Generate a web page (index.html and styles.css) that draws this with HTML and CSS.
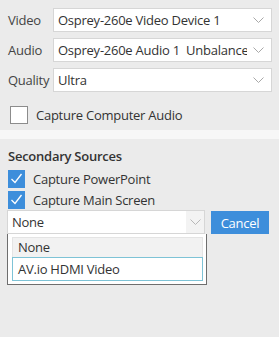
FILE: index.html
```html
<!DOCTYPE html>
<html>
<head>
<meta charset="utf-8">
<link rel="stylesheet" href="styles.css">
</head>
<body>
<div class="top">
  <div class="row">
    <span class="label">Video</span>
    <div class="select"><span class="val">Osprey-260e Video Device 1</span><svg class="chev" width="11" height="6" viewBox="0 0 11 6"><path d="M0.5 0.5 L5.5 5.5 L10.5 0.5" fill="none" stroke="#a8a8a8" stroke-width="1"/></svg></div>
  </div>
  <div class="row">
    <span class="label">Audio</span>
    <div class="select"><span class="val">Osprey-260e Audio 1&nbsp; Unbalanced</span><svg class="chev" width="11" height="6" viewBox="0 0 11 6"><path d="M0.5 0.5 L5.5 5.5 L10.5 0.5" fill="none" stroke="#a8a8a8" stroke-width="1"/></svg></div>
  </div>
  <div class="row">
    <span class="label">Quality</span>
    <div class="select"><span class="val">Ultra</span><svg class="chev" width="11" height="6" viewBox="0 0 11 6"><path d="M0.5 0.5 L5.5 5.5 L10.5 0.5" fill="none" stroke="#a8a8a8" stroke-width="1"/></svg></div>
  </div>
  <div class="check-row first">
    <span class="box"></span>
    <span class="ctext">Capture Computer Audio</span>
  </div>
</div>
<div class="sep"></div>
<div class="secondary">
  <div class="title">Secondary Sources</div>
  <div class="check-row small">
    <span class="box checked"><svg width="17" height="17" viewBox="0 0 17 17"><path d="M3.5 9 L7 12.5 L13.5 4" fill="none" stroke="#fff" stroke-width="1.3"/></svg></span>
    <span class="ctext">Capture PowerPoint</span>
  </div>
  <div class="check-row small">
    <span class="box checked"><svg width="17" height="17" viewBox="0 0 17 17"><path d="M3.5 9 L7 12.5 L13.5 4" fill="none" stroke="#fff" stroke-width="1.3"/></svg></span>
    <span class="ctext">Capture Main Screen</span>
  </div>
  <div class="drop-row">
    <div class="dd">
      <div class="select sel2"><span class="val">None</span><span class="chev-area"><svg width="11" height="6" viewBox="0 0 11 6"><path d="M0.5 0.5 L5.5 5.5 L10.5 0.5" fill="none" stroke="#b8b8b8" stroke-width="1"/></svg></span></div>
      <div class="popup">
        <div class="item hover">None</div>
        <div class="item focus">AV.io HDMI Video</div>
      </div>
    </div>
    <button class="btn">Cancel</button>
  </div>
</div>
</body>
</html>
```
FILE: styles.css
```css
html, body {
  margin: 0;
  padding: 0;
}
body {
  background: #ebebeb;
  font-family: "Open Sans", "Noto Sans", sans-serif;
  font-size: 13px;
  letter-spacing: -0.25px;
  color: #333;
  width: 279px;
  height: 337px;
  overflow: hidden;
}
.top {
  padding: 8px 7px 0 8px;
  height: 122px;
}
.row {
  display: flex;
  align-items: center;
  height: 24px;
  margin-bottom: 6px;
}
.label {
  width: 45px;
  color: #444;
}
.select {
  flex: 1;
  height: 22px;
  border: 1px solid #d6d6d6;
  background: #fff;
  display: flex;
  align-items: center;
  padding-left: 4px;
  overflow: hidden;
}
.val {
  flex: 1;
  white-space: nowrap;
  overflow: hidden;
  color: #333;
}
.chev {
  flex: none;
  margin: 0 7px 0 6px;
}
.check-row {
  display: flex;
  align-items: center;
}
.check-row.first {
  margin-top: 14px;
  padding-left: 2px;
}
.box {
  width: 16px;
  height: 16px;
  border: 1px solid #8c8c8c;
  background: #fff;
  flex: none;
}
.check-row.first .ctext {
  margin-left: 8px;
}
.sep {
  height: 9px;
  background: #f7f7f7;
}
.secondary {
  padding: 8px 8px 0 8px;
}
.title {
  font-weight: 600;
  height: 21px;
  line-height: 18px;
}
.check-row.small {
  height: 21px;
}
.box.checked {
  width: 17px;
  height: 18px;
  border: none;
  background: #3d8edb;
}
.box.checked svg {
  display: block;
}
.check-row.small .ctext {
  margin-left: 8px;
}
.drop-row {
  display: flex;
  align-items: flex-start;
}
.dd {
  position: relative;
  width: 198px;
  margin-left: -1px;
}
.sel2 {
  height: 22px;
  padding-right: 0;
}
.chev-area {
  width: 18px;
  height: 22px;
  background: #f3f3f3;
  display: flex;
  align-items: center;
  justify-content: center;
}
.popup {
  position: absolute;
  left: 0;
  top: 24px;
  border: 1px solid #6e6e6e;
  border-top: none;
  background: #fff;
  padding: 3px 3px 3px 4px;
  box-sizing: border-box;
  width: 200px;
  height: 51px;
}
.item {
  height: 20px;
  line-height: 20px;
  padding-left: 5px;
  box-sizing: border-box;
  color: #333;
}
.item.hover {
  background: #f2f2f2;
  border: 1px solid #e4e4e4;
  border-bottom: none;
  line-height: 19px;
}
.item.focus {
  height: 24px;
  line-height: 22px;
  border: 1px solid #7ec3d6;
}
.btn {
  margin-left: 6px;
  margin-top: 1px;
  width: 58px;
  height: 23px;
  border: none;
  background: #3d8edb;
  color: #fff;
  font-family: "Open Sans", "Noto Sans", sans-serif;
  font-size: 13px;
  letter-spacing: -0.25px;
  padding: 0;
}
```
